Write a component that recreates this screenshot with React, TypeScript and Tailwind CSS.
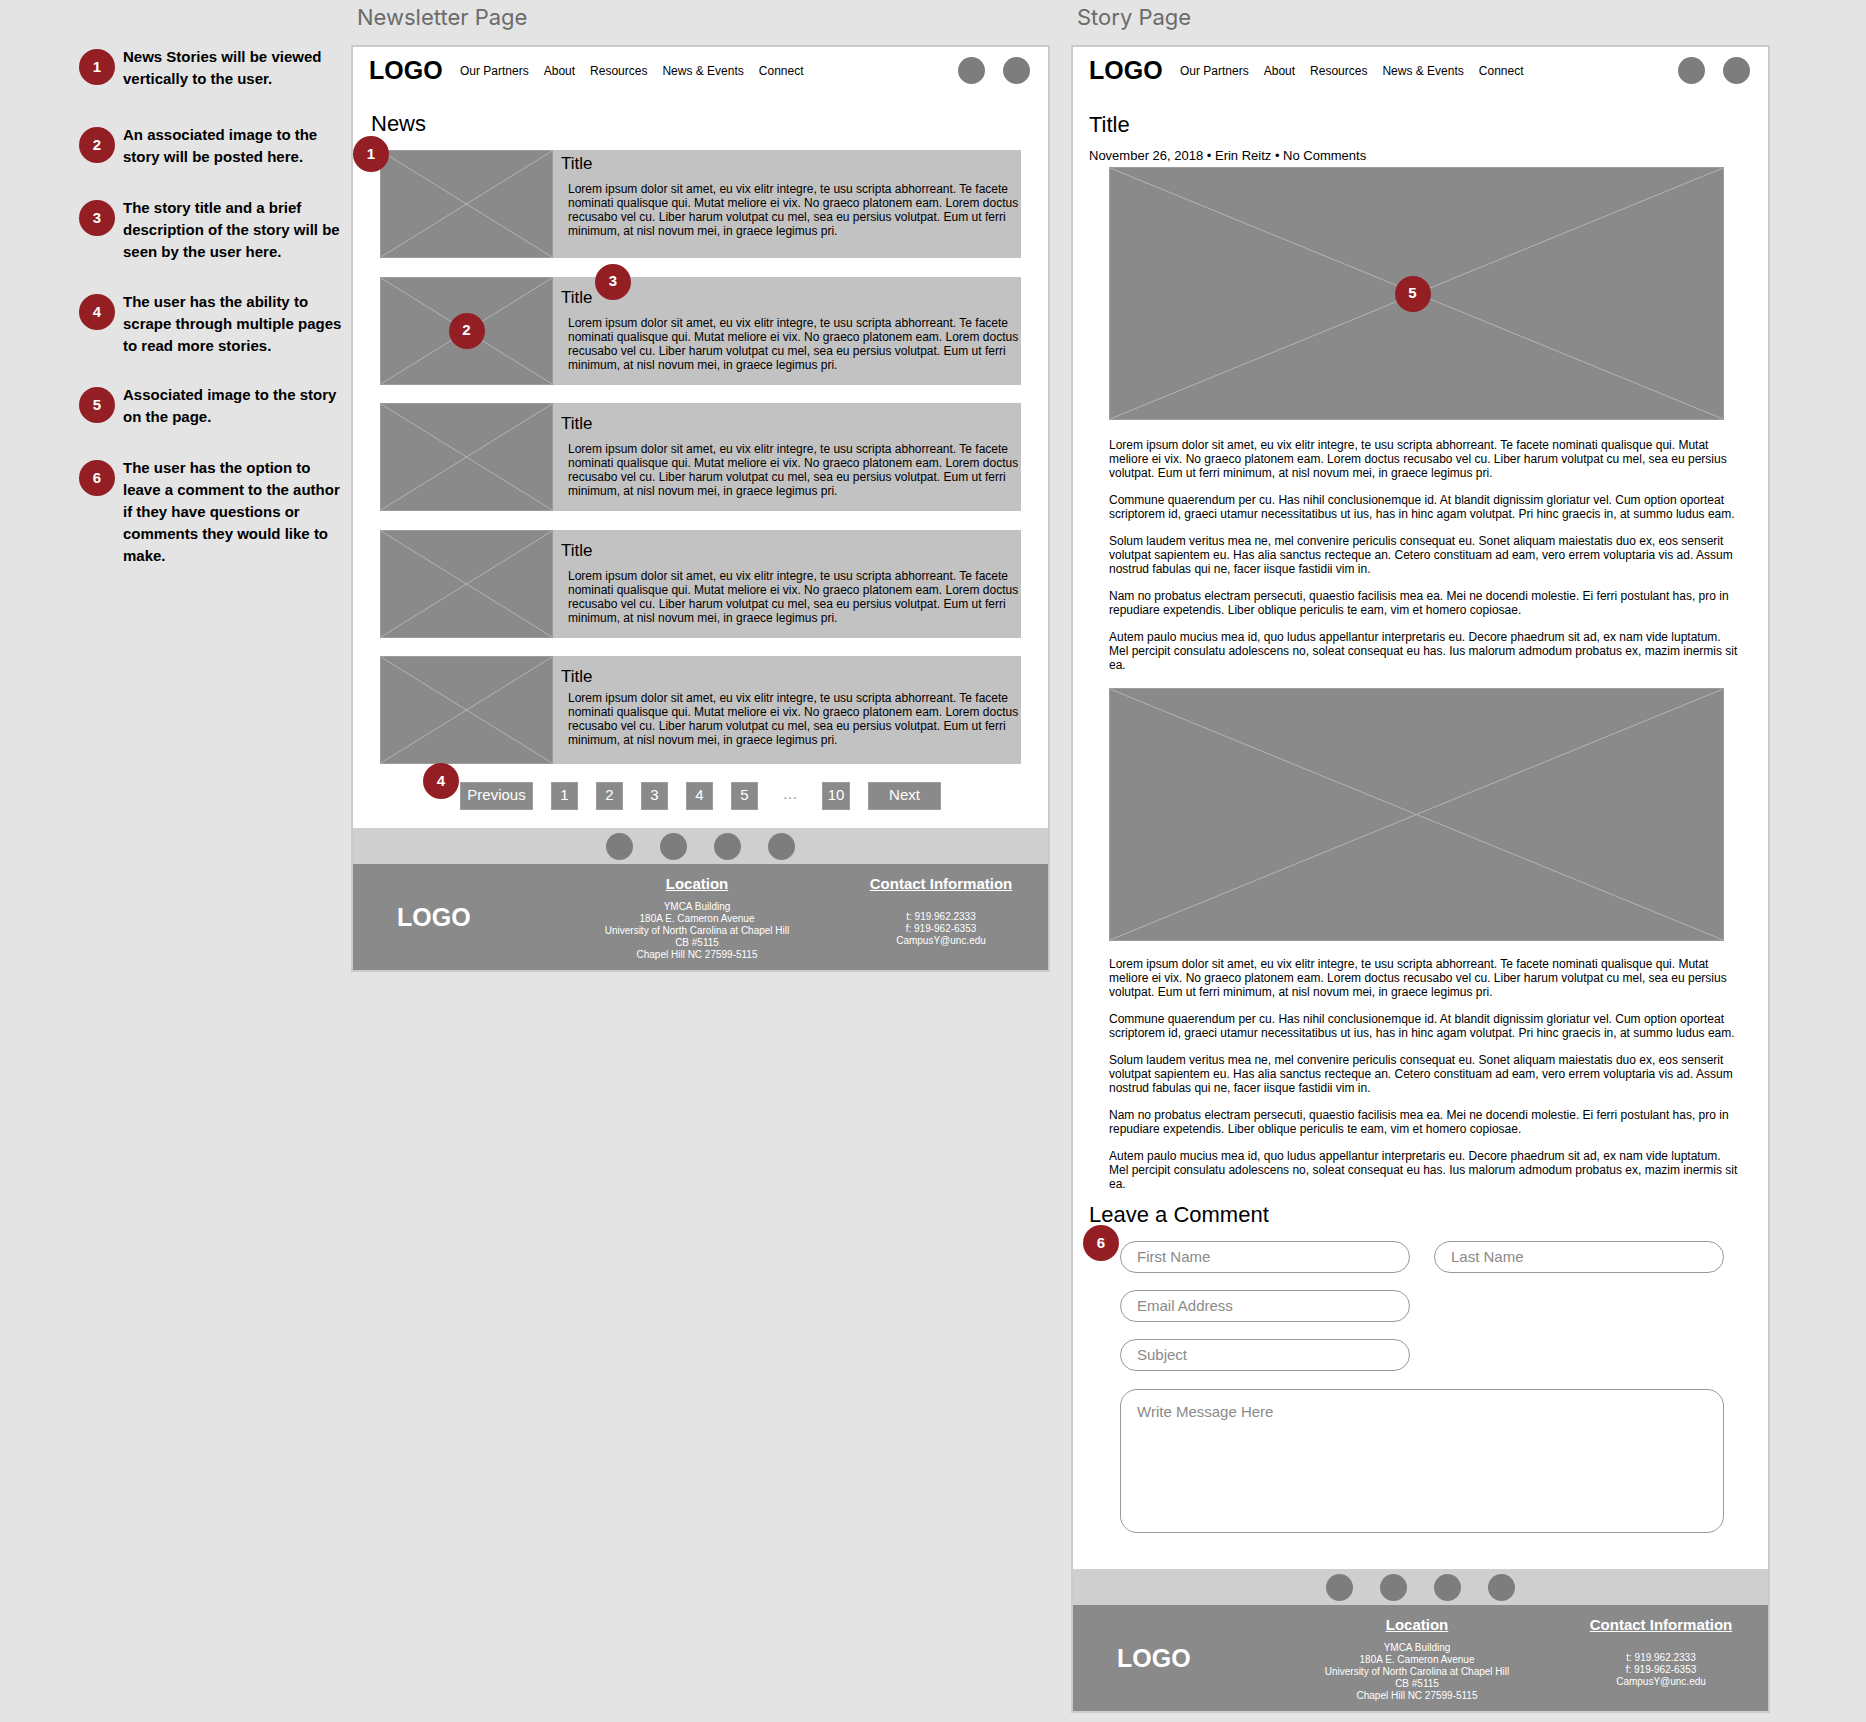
import React from "react";

const BLURB =
  "Lorem ipsum dolor sit amet, eu vix elitr integre, te usu scripta abhorreant. Te facete nominati qualisque qui. Mutat meliore ei vix. No graeco platonem eam. Lorem doctus recusabo vel cu. Liber harum volutpat cu mel, sea eu persius volutpat. Eum ut ferri minimum, at nisl novum mei, in graece legimus pri.";

const PARAGRAPHS = [
  BLURB,
  "Commune quaerendum per cu. Has nihil conclusionemque id. At blandit dignissim gloriatur vel. Cum option oporteat scriptorem id, graeci utamur necessitatibus ut ius, has in hinc agam volutpat. Pri hinc graecis in, at summo ludus eam.",
  "Solum laudem veritus mea ne, mel convenire periculis consequat eu. Sonet aliquam maiestatis duo ex, eos senserit volutpat sapientem eu. Has alia sanctus recteque an. Cetero constituam ad eam, vero errem voluptaria vis ad. Assum nostrud fabulas qui ne, facer iisque fastidii vim in.",
  "Nam no probatus electram persecuti, quaestio facilisis mea ea. Mei ne docendi molestie. Ei ferri postulant has, pro in repudiare expetendis. Liber oblique periculis te eam, vim et homero copiosae.",
  "Autem paulo mucius mea id, quo ludus appellantur interpretaris eu. Decore phaedrum sit ad, ex nam vide luptatum. Mel percipit consulatu adolescens no, soleat consequat eu has. Ius malorum admodum probatus ex, mazim inermis sit ea.",
];

const NOTES = [
  { text: "News Stories will be viewed vertically to the user.", gap: "mb-[34px]" },
  { text: "An associated image to the story will be posted here.", gap: "mb-[29px]" },
  { text: "The story title and a brief description of the story will be seen by the user here.", gap: "mb-7" },
  { text: "The user has the ability to scrape through multiple pages to read more stories.", gap: "mb-[27px]" },
  { text: "Associated image to the story on the page.", gap: "mb-[29px]" },
  { text: "The user has the option to leave a comment to the author if they have questions or comments they would like to make.", gap: "" },
];

const NAV = ["Our Partners", "About", "Resources", "News & Events", "Connect"];

function Badge({ n, className = "" }: { n: number; className?: string }) {
  return (
    <span
      className={`flex size-9 shrink-0 items-center justify-center rounded-full bg-[#931f25] text-[15px] font-bold text-white ${className}`}
    >
      {n}
    </span>
  );
}

function Placeholder({ className = "" }: { className?: string }) {
  return (
    <svg
      className={`block border border-[#9c9c9c] bg-[#8a8a8a] ${className}`}
      viewBox="0 0 100 100"
      preserveAspectRatio="none"
      aria-hidden="true"
    >
      <path d="M0 0L100 100M100 0L0 100" stroke="#b4b4b4" strokeWidth="1" vectorEffect="non-scaling-stroke" fill="none" />
    </svg>
  );
}

function SiteHeader() {
  return (
    <header className="flex items-center pt-2.5 pr-[18px] pl-4">
      <a href="#" className="w-[91px] text-[25px] leading-[27px] font-bold">
        LOGO
      </a>
      <nav className="flex gap-[15px] text-xs">
        {NAV.map((item) => (
          <a key={item} href="#" className="whitespace-nowrap">
            {item}
          </a>
        ))}
      </nav>
      <div className="ml-auto flex gap-[18px]">
        <button aria-label="Search" className="size-[27px] rounded-full bg-[#7d7d7d]" />
        <button aria-label="Account" className="size-[27px] rounded-full bg-[#7d7d7d]" />
      </div>
    </header>
  );
}

function SiteFooter() {
  return (
    <footer>
      <div className="flex h-9 items-center justify-center gap-[27px] bg-[#cfcfcf]">
        {["Facebook", "Twitter", "Instagram", "YouTube"].map((s) => (
          <a key={s} href="#" aria-label={s} className="size-[27px] rounded-full bg-[#7d7d7d]" />
        ))}
      </div>
      <div className="grid h-[106px] grid-cols-[223px_1fr_230px] bg-[#8a8a8a] text-white">
        <div className="self-center pl-11 text-[25px] leading-[27px] font-bold">LOGO</div>
        <address className="pt-2.5 text-center text-[10px] leading-3 not-italic">
          <h3 className="mb-[7px] text-[15px] leading-5 font-bold underline">Location</h3>
          <p>YMCA Building</p>
          <p>180A E. Cameron Avenue</p>
          <p>University of North Carolina at Chapel Hill</p>
          <p>CB #5115</p>
          <p>Chapel Hill NC 27599-5115</p>
        </address>
        <address className="pt-2.5 pl-4 text-center text-[10px] leading-3 not-italic">
          <h3 className="mb-[17px] text-[15px] leading-5 font-bold whitespace-nowrap underline">Contact Information</h3>
          <p>t: 919.962.2333</p>
          <p>f: 919-962-6353</p>
          <p>
            <a href="mailto:CampusY@unc.edu">CampusY@unc.edu</a>
          </p>
        </address>
      </div>
    </footer>
  );
}

function Artboard({ name, children }: { name: string; children: React.ReactNode }) {
  return (
    <section className="min-w-0 flex-1">
      <h1 className="h-[45px] pt-0.5 pl-1.5 font-['Inter'] text-[22px] leading-[30px] text-[#6b6b6b]">{name}</h1>
      <div className="border-2 border-[#cbcbcb] bg-white">
        <SiteHeader />
        {children}
        <SiteFooter />
      </div>
    </section>
  );
}

function StoryCard({ index }: { index: number }) {
  return (
    <li className="relative flex h-[108px] bg-[#c2c2c2]">
      <div className="relative w-[173px] shrink-0">
        <Placeholder className="size-full" />
        {index === 1 && <Badge n={2} className="absolute inset-0 m-auto" />}
      </div>
      <div className={`min-w-0 flex-1 pl-2 ${index === 0 ? "pt-1" : "pt-[11px]"}`}>
        <h3 className="text-[17px] leading-5">Title</h3>
        <p className={`pr-0.5 pl-[7px] text-xs leading-[14px] ${index === 4 ? "mt-1" : "mt-2"}`}>{BLURB}</p>
      </div>
      {index === 0 && <Badge n={1} className="absolute -top-3.5 -left-[27px]" />}
      {index === 1 && <Badge n={3} className="absolute -top-[13px] left-[215px]" />}
    </li>
  );
}

function Pagination() {
  const box = "h-7 border border-[#9c9c9c] bg-[#8a8a8a] pb-0.5 text-center text-white";
  return (
    <nav aria-label="Pages" className="relative mt-[18px] mr-auto ml-[107px] flex w-fit gap-[18px] text-[15px] leading-6">
      <button className={`${box} w-[73px]`}>Previous</button>
      {["1", "2", "3", "4", "5"].map((p) => (
        <button key={p} className={`${box} w-[27px]`}>
          {p}
        </button>
      ))}
      <span className="w-7 text-center text-[#8a8a8a]">…</span>
      <button className={`${box} w-7`}>10</button>
      <button className={`${box} w-[73px]`}>Next</button>
      <Badge n={4} className="absolute -top-[19px] -left-[37px]" />
    </nav>
  );
}

function StoryText() {
  return (
    <div className="-mr-4 flex flex-col gap-[13px] text-xs leading-[14px]">
      {PARAGRAPHS.map((p, i) => (
        <p key={i}>{p}</p>
      ))}
    </div>
  );
}

function CommentForm() {
  const field =
    "h-8 w-full rounded-full border border-[#999999] bg-white px-4 pb-0.5 text-[15px] placeholder:text-[#8a8a8a] outline-none";
  return (
    <form className="relative mt-3 mr-[44px] ml-[47px] grid grid-cols-2 gap-x-6 gap-y-[17px]">
      <input className={field} placeholder="First Name" aria-label="First Name" />
      <input className={field} placeholder="Last Name" aria-label="Last Name" />
      <input className={`${field} col-start-1`} placeholder="Email Address" aria-label="Email Address" type="email" />
      <input className={`${field} col-start-1`} placeholder="Subject" aria-label="Subject" />
      <textarea
        className="col-span-2 mt-px block h-36 resize-none rounded-[17px] border border-[#999999] px-4 pt-3 text-[15px] leading-5 outline-none placeholder:text-[#8a8a8a]"
        placeholder="Write Message Here"
        aria-label="Write Message Here"
      />
      <Badge n={6} className="absolute -top-4 -left-[37px]" />
    </form>
  );
}

export default function App() {
  return (
    <main className="flex min-h-screen bg-[#e4e4e4] pr-24 pb-2 pl-[79px] font-['Liberation_Sans',sans-serif] text-black">
      <ol className="w-[272px] shrink-0 pt-[46px]">
        {NOTES.map((note, i) => (
          <li key={i} className={`flex gap-2 ${note.gap}`}>
            <Badge n={i + 1} className="mt-[3px]" />
            <p className="text-[15px] leading-[22px] font-bold">{note.text}</p>
          </li>
        ))}
      </ol>

      <div className="flex min-w-0 flex-1 gap-[21px]">
        <Artboard name="Newsletter Page">
          <h2 className="mt-[26px] pl-[18px] text-[22px] leading-7">News</h2>
          <ul className="mt-3 mr-[27px] ml-[27px] flex min-h-[614px] flex-col justify-between">
            {[0, 1, 2, 3, 4].map((i) => (
              <StoryCard key={i} index={i} />
            ))}
          </ul>
          <Pagination />
          <div className="h-[18px]" />
        </Artboard>

        <Artboard name="Story Page">
          <h2 className="mt-[27px] pl-4 text-[22px] leading-7">Title</h2>
          <p className="mt-[9px] pl-4 text-[13px] leading-4">November 26, 2018 • Erin Reitz • No Comments</p>
          <div className="mt-[3px] mr-[44px] ml-9">
            <div className="relative mb-[18px]">
              <Placeholder className="h-[253px] w-full" />
              <Badge n={5} className="absolute inset-y-0 right-2 left-0 m-auto" />
            </div>
            <StoryText />
            <Placeholder className="mt-4 mb-4 h-[253px] w-full" />
            <StoryText />
          </div>
          <h2 className="mt-2.5 pl-4 text-[22px] leading-7">Leave a Comment</h2>
          <CommentForm />
          <div className="h-9" />
        </Artboard>
      </div>
    </main>
  );
}
